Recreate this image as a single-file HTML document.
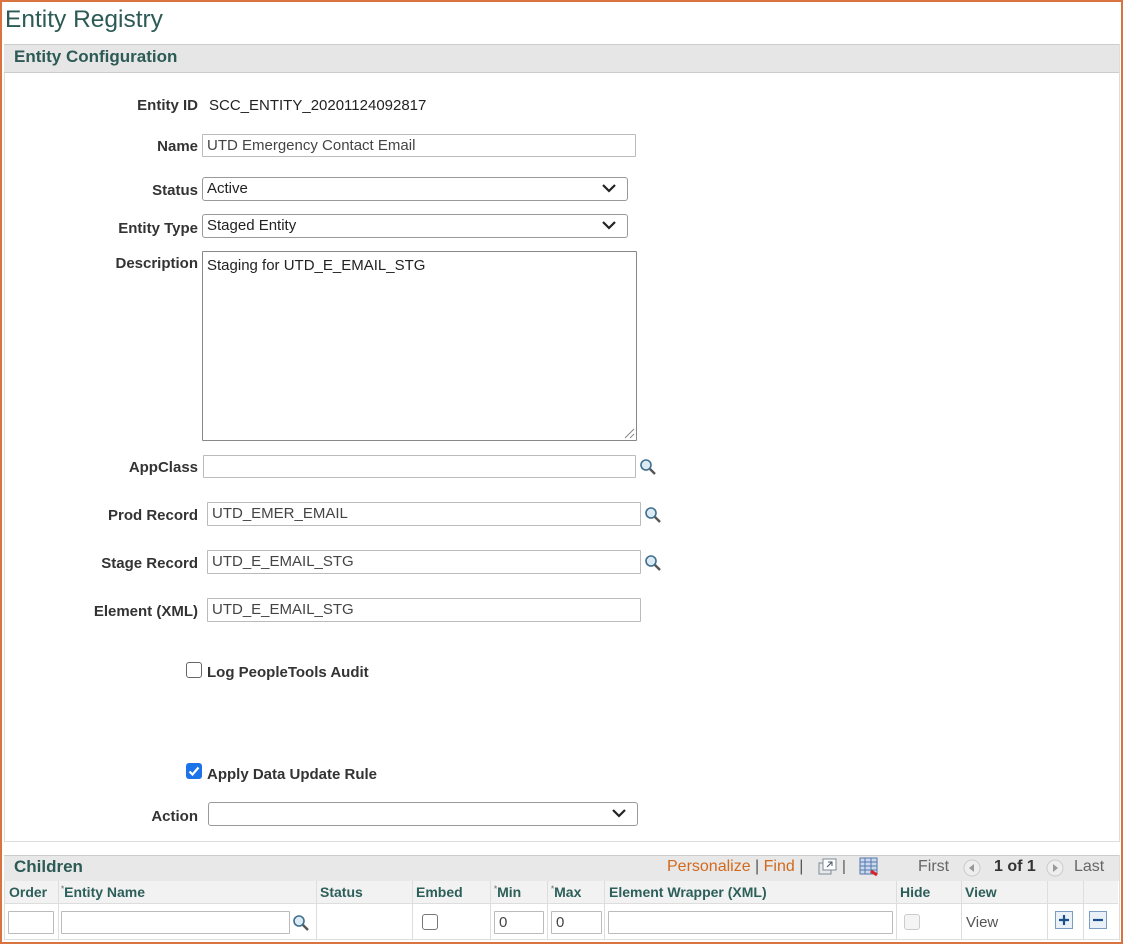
<!DOCTYPE html><html><head><style>
body{margin:0;width:1123px;height:944px;background:#fff;font-family:"Liberation Sans",Arial,sans-serif;position:relative;overflow:hidden}
.a{position:absolute}
.frame{left:0;top:0;width:1119px;height:940px;border:2px solid #d9733f}
.lbl{font-size:15px;font-weight:bold;color:#333;text-align:right;width:200px;left:-2px}
.inp{border:1px solid #bbb;background:#fff;font-size:15px;color:#444;box-sizing:border-box;padding:2px 4px;border-radius:1px}
.sel{border:1px solid #999;border-radius:3px;color:#222}
.chev{position:absolute;right:10px;top:4px}
.mag{position:absolute}
.th{font-size:14px;font-weight:bold;color:#2c5f5a;top:884px}
</style></head><body>
<div class="a frame"></div>
<div class="a" style="left:5px;top:6px;font-size:24.5px;color:#2c5a55">Entity Registry</div>
<div class="a" style="left:4px;top:44px;width:1114px;height:797px;border:1px solid #ddd;border-top:none"></div>
<div class="a" style="left:4px;top:44px;width:1115px;height:27px;background:#e6e6e6;border-top:1px solid #ccc;border-bottom:1px solid #ccc"></div>
<div class="a" style="left:14px;top:47px;font-size:17px;font-weight:bold;color:#2c5a55">Entity Configuration</div>

<div class="a lbl" style="top:97px">Entity ID</div>
<div class="a" style="left:209px;top:97px;font-size:15px;color:#222">SCC_ENTITY_20201124092817</div>

<div class="a lbl" style="top:138px">Name</div>
<div class="a inp" style="left:202px;top:134px;width:434px;height:23px">UTD Emergency Contact Email</div>

<div class="a lbl" style="top:182px">Status</div>
<div class="a inp sel" style="left:202px;top:177px;width:426px;height:24px">Active<svg class="chev" width="16" height="12" viewBox="0 0 16 12"><path d="M2 3l6 6 6-6" stroke="#222" stroke-width="2.2" fill="none"/></svg></div>

<div class="a lbl" style="top:220px">Entity Type</div>
<div class="a inp sel" style="left:202px;top:214px;width:426px;height:24px">Staged Entity<svg class="chev" width="16" height="12" viewBox="0 0 16 12"><path d="M2 3l6 6 6-6" stroke="#222" stroke-width="2.2" fill="none"/></svg></div>

<div class="a lbl" style="top:255px">Description</div>
<div class="a inp" style="left:202px;top:251px;width:435px;height:190px;border-color:#888;color:#222;padding:5px 4px">Staging for UTD_E_EMAIL_STG
<svg class="a" style="right:1px;bottom:1px" width="12" height="12"><path d="M11 2L2 11M11 7L7 11" stroke="#888"/></svg></div>

<div class="a lbl" style="top:459px">AppClass</div>
<div class="a inp" style="left:203px;top:455px;width:433px;height:23px"></div>
<svg class="mag" style="left:639px;top:458px" width="18" height="18"><circle cx="7" cy="7" r="5" fill="#dbeaf5" stroke="#3f6f8f" stroke-width="1.6"/><path d="M11 11l5 5" stroke="#555" stroke-width="2.4"/></svg>

<div class="a lbl" style="top:507px">Prod Record</div>
<div class="a inp" style="left:207px;top:502px;width:434px;height:24px">UTD_EMER_EMAIL</div>
<svg class="mag" style="left:644px;top:506px" width="18" height="18"><circle cx="7" cy="7" r="5" fill="#dbeaf5" stroke="#3f6f8f" stroke-width="1.6"/><path d="M11 11l5 5" stroke="#555" stroke-width="2.4"/></svg>

<div class="a lbl" style="top:555px">Stage Record</div>
<div class="a inp" style="left:207px;top:550px;width:434px;height:24px">UTD_E_EMAIL_STG</div>
<svg class="mag" style="left:644px;top:554px" width="18" height="18"><circle cx="7" cy="7" r="5" fill="#dbeaf5" stroke="#3f6f8f" stroke-width="1.6"/><path d="M11 11l5 5" stroke="#555" stroke-width="2.4"/></svg>

<div class="a lbl" style="top:603px">Element (XML)</div>
<div class="a inp" style="left:207px;top:598px;width:434px;height:24px">UTD_E_EMAIL_STG</div>

<div class="a" style="left:186px;top:662px;width:14px;height:14px;border:1.5px solid #666;border-radius:3px"></div>
<div class="a" style="left:207px;top:664px;font-size:15px;font-weight:bold;color:#333">Log PeopleTools Audit</div>

<div class="a" style="left:186px;top:763px;width:16px;height:16px;background:#1a73e8;border-radius:3px"><svg width="16" height="16"><path d="M3.5 8.5l3 3 6-7" stroke="#fff" stroke-width="2.2" fill="none"/></svg></div>
<div class="a" style="left:207px;top:766px;font-size:15px;font-weight:bold;color:#333">Apply Data Update Rule</div>

<div class="a lbl" style="top:808px">Action</div>
<div class="a inp sel" style="left:208px;top:802px;width:430px;height:24px"><svg class="chev" width="16" height="12" viewBox="0 0 16 12"><path d="M2 3l6 6 6-6" stroke="#222" stroke-width="2.2" fill="none"/></svg></div>

<div class="a" style="left:4px;top:855px;width:1114px;height:84px;border:1px solid #ddd;border-top:none"></div>
<div class="a" style="left:4px;top:855px;width:1115px;height:25px;background:#e8e8e8;border-top:1px solid #ccc"></div>
<div class="a" style="left:14px;top:857px;font-size:17px;font-weight:bold;color:#2c5a55">Children</div>
<div class="a" style="left:667px;top:858px;font-size:16px;color:#d2691e">Personalize <span style="color:#555">|</span> Find <span style="color:#555">|</span></div>
<svg class="a" style="left:818px;top:858px" width="20" height="18"><rect x="1" y="5" width="12" height="11" fill="none" stroke="#7a8a9a"/><rect x="5" y="1" width="13" height="11" fill="#fff" stroke="#7a8a9a"/><path d="M9 9l5-5M10 4h4v4" stroke="#456" fill="none"/></svg>
<div class="a" style="left:842px;top:858px;font-size:15px;color:#555">|</div>
<svg class="a" style="left:859px;top:857px" width="21" height="20"><rect x="1" y="1" width="17" height="16" fill="#c9d9ee" stroke="#5577aa"/><path d="M1 5h17M1 9h17M1 13h17M6 1v16M12 1v16" stroke="#5577aa"/><path d="M12 14l6 4" stroke="#d22" stroke-width="3"/></svg>
<div class="a" style="left:918px;top:858px;font-size:16px;color:#666">First</div>
<svg class="a" style="left:963px;top:859px" width="18" height="18"><circle cx="9" cy="9" r="8" fill="#eee" stroke="#ccc"/><path d="M11 5l-5 4 5 4z" fill="#999"/></svg>
<div class="a" style="left:994px;top:858px;font-size:16px;color:#333;font-weight:bold">1 of 1</div>
<svg class="a" style="left:1046px;top:859px" width="18" height="18"><circle cx="9" cy="9" r="8" fill="#eee" stroke="#ccc"/><path d="M7 5l5 4-5 4z" fill="#999"/></svg>
<div class="a" style="left:1074px;top:858px;font-size:16px;color:#666">Last</div>

<div class="a" style="left:5px;top:881px;width:1113px;height:22px;background:#f2f2f2;border-bottom:1px solid #ddd"></div>
<div class="a" style="left:5px;top:881px;width:1113px;height:58px;background:
linear-gradient(#ddd,#ddd) 53px 0/1px 100% no-repeat,linear-gradient(#ddd,#ddd) 311px 0/1px 100% no-repeat,linear-gradient(#ddd,#ddd) 407px 0/1px 100% no-repeat,linear-gradient(#ddd,#ddd) 485px 0/1px 100% no-repeat,linear-gradient(#ddd,#ddd) 542px 0/1px 100% no-repeat,linear-gradient(#ddd,#ddd) 599px 0/1px 100% no-repeat,linear-gradient(#ddd,#ddd) 891px 0/1px 100% no-repeat,linear-gradient(#ddd,#ddd) 956px 0/1px 100% no-repeat,linear-gradient(#ddd,#ddd) 1042px 0/1px 100% no-repeat,linear-gradient(#ddd,#ddd) 1078px 0/1px 100% no-repeat"></div>
<div class="a th" style="left:9px">Order</div>
<div class="a th" style="left:61px"><sup style="font-size:8px;color:#888">*</sup>Entity Name</div>
<div class="a th" style="left:320px">Status</div>
<div class="a th" style="left:416px">Embed</div>
<div class="a th" style="left:494px"><sup style="font-size:8px;color:#888">*</sup>Min</div>
<div class="a th" style="left:551px"><sup style="font-size:8px;color:#888">*</sup>Max</div>
<div class="a th" style="left:609px">Element Wrapper (XML)</div>
<div class="a th" style="left:900px">Hide</div>
<div class="a th" style="left:965px">View</div>

<div class="a inp" style="left:8px;top:911px;width:46px;height:23px"></div>
<div class="a inp" style="left:61px;top:911px;width:229px;height:23px"></div>
<svg class="mag" style="left:292px;top:914px" width="18" height="18"><circle cx="7" cy="7" r="5" fill="#dbeaf5" stroke="#3f6f8f" stroke-width="1.6"/><path d="M11 11l5 5" stroke="#555" stroke-width="2.4"/></svg>
<div class="a" style="left:422px;top:914px;width:14px;height:14px;border:1.5px solid #777;border-radius:3px"></div>
<div class="a inp" style="left:494px;top:911px;width:50px;height:23px">0</div>
<div class="a inp" style="left:551px;top:911px;width:51px;height:23px">0</div>
<div class="a inp" style="left:608px;top:911px;width:285px;height:23px"></div>
<div class="a" style="left:904px;top:914px;width:14px;height:14px;border:1px solid #ccc;border-radius:3px;background:#f4f4f4"></div>
<div class="a" style="left:966px;top:914px;font-size:15px;color:#555">View</div>
<div class="a" style="left:1055px;top:911px;width:16px;height:16px;border:1px solid #7a9cc0;background:#e9f0f8"><svg width="16" height="16"><path d="M8 3v10M3 8h10" stroke="#1b4f8a" stroke-width="2.2"/></svg></div>
<div class="a" style="left:1089px;top:911px;width:16px;height:16px;border:1px solid #7a9cc0;background:#e9f0f8"><svg width="16" height="16"><path d="M3 8h10" stroke="#1b4f8a" stroke-width="2.2"/></svg></div>
</body></html>
